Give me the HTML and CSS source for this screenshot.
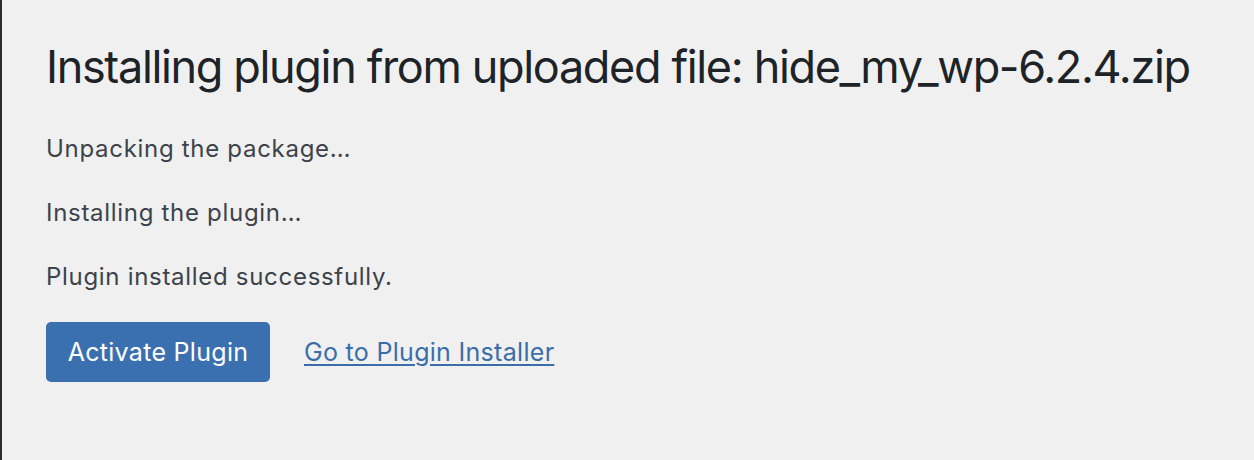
FILE: index.html
```html
<!DOCTYPE html>
<html lang="en">
<head>
<meta charset="utf-8">
<title>Install Plugins</title>
<link rel="stylesheet" href="styles.css">
</head>
<body>
<div class="wrap">
  <h1 class="title">Installing plugin from uploaded file: hide_my_wp-6.2.4.zip</h1>
  <p class="step">Unpacking the package…</p>
  <p class="step">Installing the plugin…</p>
  <p class="step">Plugin installed successfully.</p>
  <div class="actions">
    <a class="button-primary" href="#">Activate Plugin</a>
    <a class="link" href="#">Go to Plugin Installer</a>
  </div>
</div>
</body>
</html>
```

FILE: styles.css
```css
html, body {
  margin: 0;
  padding: 0;
  height: 100%;
}
body {
  background: #f0f0f1;
  font-family: Inter, "Noto Sans", sans-serif;
  color: #3c434a;
}
.wrap {
  box-sizing: border-box;
  min-height: 100%;
  border-left: 2px solid #2a2a2a;
  padding: 38px 0 0 44px;
}
.title {
  margin: 0 0 36px;
  font-size: 45px;
  font-weight: 400;
  line-height: 58px;
  letter-spacing: -1.35px;
  white-space: nowrap;
  color: #1d2327;
}
.step {
  margin: 0 0 30px;
  font-size: 24px;
  line-height: 34px;
  letter-spacing: 0.7px;
}
.step:last-of-type {
  margin-bottom: 28px;
}
.actions {
  display: flex;
  align-items: center;
  gap: 34px;
}
.button-primary {
  display: inline-flex;
  align-items: center;
  justify-content: center;
  width: 224px;
  height: 60px;
  box-sizing: border-box;
  background: #3a70b0;
  color: #fff;
  border-radius: 5px;
  font-size: 25px;
  letter-spacing: 0.3px;
  text-decoration: none;
}
.link {
  color: #3a6ea9;
  font-size: 25px;
  letter-spacing: 0.3px;
  text-decoration: underline;
  text-underline-offset: 3px;
  text-decoration-thickness: 2px;
}
```
